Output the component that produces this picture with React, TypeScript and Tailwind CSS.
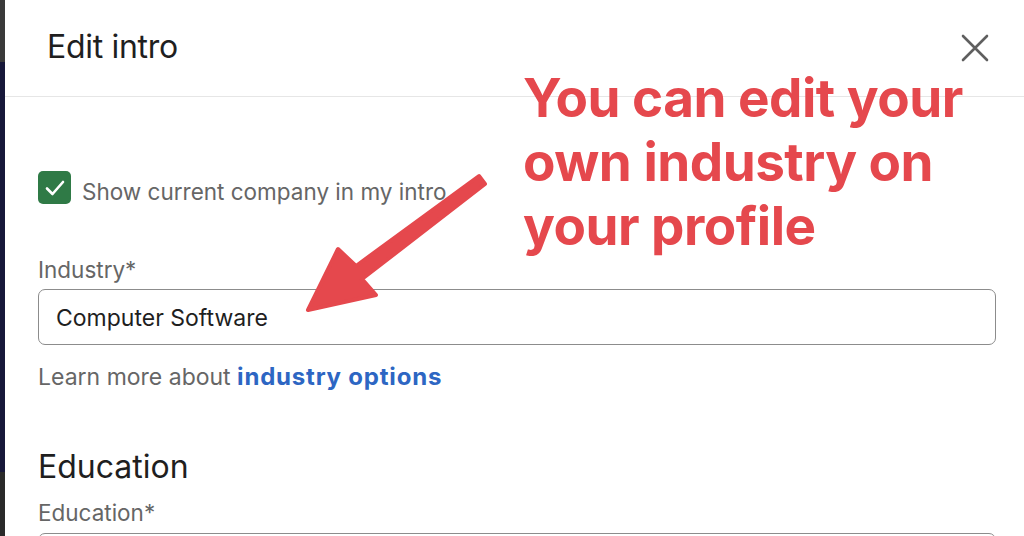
import React from "react";

export default function App() {
  return (
    <div className="relative flex h-[536px] w-[1024px] overflow-hidden bg-white font-['Inter',sans-serif]">
      <div className="flex w-[5px] shrink-0 flex-col">
        <div className="h-[62px] bg-[#3a3a3a]" />
        <div className="h-[410px] bg-[#17183a]" />
        <div className="flex-1 bg-[#2a2a2a]" />
      </div>
      <div className="flex flex-1 flex-col rounded-tl-[10px] bg-white">
        <div className="flex h-[97px] shrink-0 items-start justify-between border-b border-[#e6e6e6] pl-[42px] pr-[34px] pt-[27px]">
          <h1 className="text-[32px] leading-[40px] tracking-[-0.3px] text-[#1f1f1f]">Edit intro</h1>
          <svg width="30" height="30" viewBox="0 0 30 30" className="mt-[6px]">
            <path d="M3 3 L27 27 M27 3 L3 27" stroke="#5f5f5f" strokeWidth="2.6" strokeLinecap="round" />
          </svg>
        </div>
        <div className="flex flex-col pl-[33px] pr-[28px]">
          <div className="mt-[74px] flex items-center gap-[11px]">
            <div className="flex h-[33px] w-[33px] shrink-0 items-center justify-center rounded-[5px] bg-[#2f7a46]">
              <svg width="22" height="18" viewBox="0 0 22 18">
                <path d="M3 9.5 L8.5 15 L19 3" stroke="white" strokeWidth="2.6" fill="none" strokeLinecap="round" strokeLinejoin="round" />
              </svg>
            </div>
            <span className="translate-y-[4px] text-[22.5px] leading-[30px] text-[#666666]">Show current company in my intro</span>
          </div>
          <div className="mt-[52px] text-[22.5px] leading-[28px] text-[#666666]">Industry*</div>
          <div className="mt-[5px] flex h-[56px] items-center rounded-[7px] border-[1.5px] border-[#8c8c8c] px-[17px] pt-[2px]">
            <span className="text-[23px] text-[#1f1f1f]">Computer Software</span>
          </div>
          <div className="mt-[16px] text-[23px] leading-[32px] text-[#666666]">
            Learn more about <span className="text-[24px] font-bold tracking-[0.8px] text-[#2d66c3]">industry options</span>
          </div>
          <div className="mt-[54px] text-[32px] leading-[40px] text-[#1f1f1f]">Education</div>
          <div className="mt-[12px] text-[22.5px] leading-[28px] text-[#666666]">Education*</div>
          <div className="mt-[6px] h-[56px] rounded-[7px] border-[1.5px] border-[#8c8c8c]" />
        </div>
      </div>
      <div className="absolute left-[523px] top-[66px] text-[53px] font-bold leading-[64px] tracking-[-0.5px] text-[#e5484d]">
        You can edit your
        <br />
        own industry on
        <br />
        your profile
      </div>
      <svg className="absolute left-0 top-0" width="1024" height="536" viewBox="0 0 1024 536">
        <path
          d="M479 176 L356 266 L338 249 L308 310 L376 295 L362 279 L485 184 Z"
          fill="#e5484d"
          stroke="#e5484d"
          strokeWidth="4"
          strokeLinejoin="round"
        />
      </svg>
    </div>
  );
}
